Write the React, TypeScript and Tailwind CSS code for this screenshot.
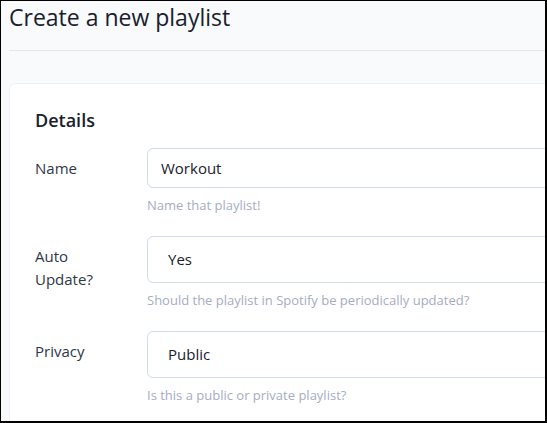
import React from "react";

function Row({
  label,
  value,
  help,
  tall,
}: {
  label: React.ReactNode;
  value: string;
  help: string;
  tall?: boolean;
}) {
  return (
    <div className="flex mb-[22px]">
      <div className="w-[112px] shrink-0 pt-[9px] text-[15px] leading-[23px] text-[#2d3748]">
        {label}
      </div>
      <div className="flex-1 min-w-0">
        <div
          className={
            tall
              ? "h-[47px] w-[420px] flex items-center pl-[20px] rounded-[6px] border border-[#d2dce8] bg-white text-[15px] text-[#1a202c]"
              : "h-[40px] w-[420px] flex items-center pl-[13px] rounded-[6px] border border-[#d2dce8] bg-white text-[15px] text-[#1a202c]"
          }
        >
          {value}
        </div>
        <div className="mt-[8px] text-[13px] leading-[18px] text-[#a5adc4] whitespace-nowrap">
          {help}
        </div>
      </div>
    </div>
  );
}

export default function App() {
  return (
    <div
      className="w-[547px] h-[423px] overflow-hidden bg-[#f8fafc] border-black border-t border-l border-r-2 border-b-2"
      style={{ fontFamily: '"Open Sans", sans-serif' }}
    >
      <div className="pl-[8px]">
        <div className="h-[50px] border-b border-[#e2e8f0]">
          <h1 className="text-[23px] leading-[32px] text-[#1a202c]">Create a new playlist</h1>
        </div>
        <div className="mt-[32px] bg-white rounded-l-[6px] border border-r-0 border-[#edf2f7] pl-[25px] pt-[22px] h-[400px]">
          <h2 className="text-[18px] font-semibold leading-[28px] text-[#1a202c] mb-[14px]">Details</h2>
          <Row label="Name" value="Workout" help="Name that playlist!" />
          <Row
            label={
              <>
                Auto
                <br />
                Update?
              </>
            }
            value="Yes"
            help="Should the playlist in Spotify be periodically updated?"
            tall
          />
          <Row
            label="Privacy"
            value="Public"
            help="Is this a public or private playlist?"
            tall
          />
        </div>
      </div>
    </div>
  );
}
